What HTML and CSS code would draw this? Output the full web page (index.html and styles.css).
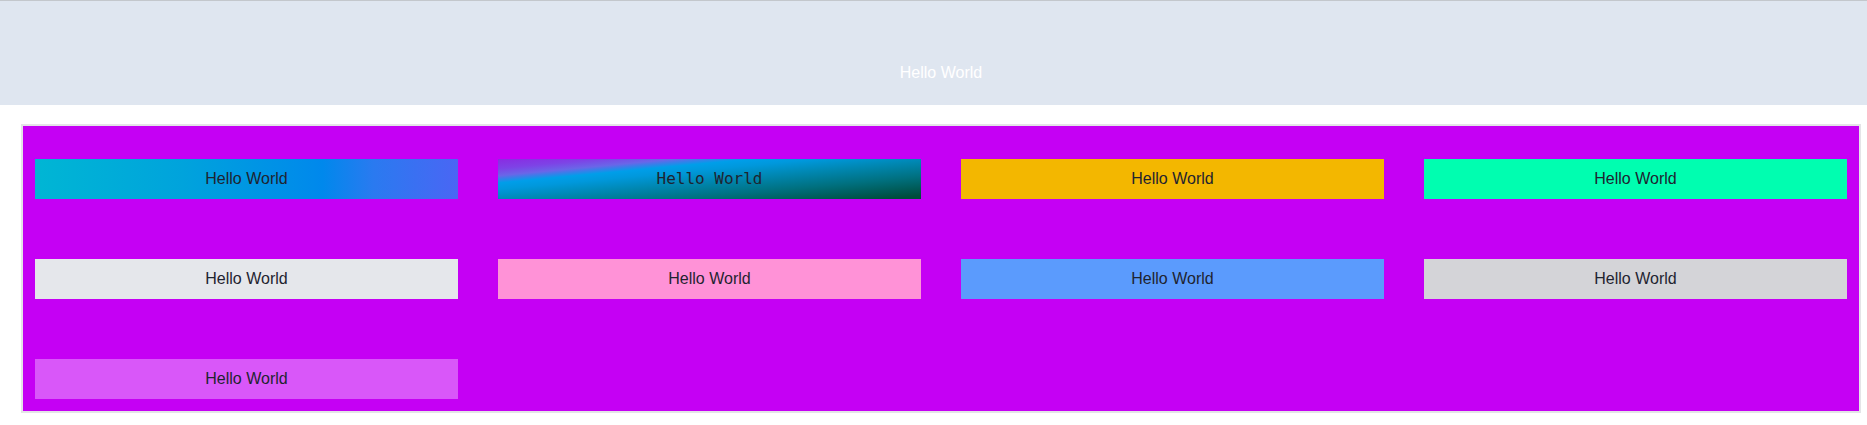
FILE: index.html
```html
<!DOCTYPE html>
<html>
<head>
<meta charset="utf-8">
<link rel="stylesheet" href="styles.css">
</head>
<body>
<div class="header">Hello World</div>
<div class="panel">
  <div class="cell c1">Hello World</div>
  <div class="cell c2 mono">Hello World</div>
  <div class="cell c3">Hello World</div>
  <div class="cell c4">Hello World</div>
  <div class="cell c5">Hello World</div>
  <div class="cell c6">Hello World</div>
  <div class="cell c7">Hello World</div>
  <div class="cell c8">Hello World</div>
  <div class="cell c9">Hello World</div>
</div>
</body>
</html>
```

FILE: styles.css
```css
html, body {
  margin: 0;
  padding: 0;
  background: #ffffff;
  font-family: "Liberation Sans", Arial, sans-serif;
  font-size: 16px;
}

.header {
  border-top: 1px solid #c3c7cc;
  background: #dfe6f0;
  color: #ffffff;
  height: 42px;
  padding-top: 62px;
  padding-left: 15px;
  line-height: 20px;
  text-align: center;
}

.panel {
  margin: 19px 0 0 21px;
  width: 1840px;
  border: 2px solid #e4e4e7;
  background: #c500f4;
  padding: 33px 12px 12px 12px;
  box-sizing: border-box;
  display: grid;
  grid-template-columns: repeat(4, 423px);
  column-gap: 40px;
  row-gap: 60px;
}

.cell {
  height: 40px;
  line-height: 40px;
  text-align: center;
  color: #1f2430;
}

.mono {
  font-family: "DejaVu Sans Mono", monospace;
  font-size: 16px;
}

.c1 {
  background: linear-gradient(to right, #00b6d4 0%, #00a3dc 35%, #0088ec 68%, #2a7af0 80%, #4a66f4 100%);
}

.c2 {
  background: linear-gradient(to bottom right, #8a2be2 0%, #7e42e6 12%, #6a66e8 21%, #3a7ee9 25%, #009ee9 30%, #0098dc 38%, #0088b4 52%, #00707f 72%, #004c3c 96%);
}

.c3 { background: #f3b700; }
.c4 { background: #00feb0; }
.c5 { background: #e5e7eb; }
.c6 { background: #ff92d7; }
.c7 { background: #5b9bfd; }
.c8 { background: #d4d4d8; }
.c9 { background: #d957f9; }
```
